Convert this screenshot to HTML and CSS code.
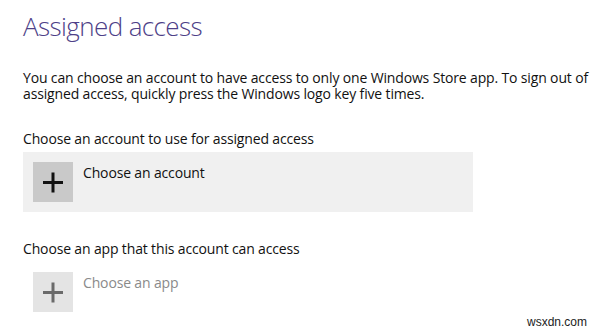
FILE: index.html
```html
<!DOCTYPE html>
<html lang="en">
<head>
<meta charset="utf-8">
<title>Assigned access</title>
<link rel="stylesheet" href="styles.css">
</head>
<body>
<main class="page">
  <h1 class="title">Assigned access</h1>
  <p class="intro">You can choose an account to have access to only one Windows Store app. To sign out of assigned access, quickly press the Windows logo key five times.</p>

  <section class="group">
    <div class="label">Choose an account to use for assigned access</div>
    <div class="picker picker-active">
      <span class="plus plus-dark">
        <svg viewBox="0 0 40 40" width="40" height="40" aria-hidden="true"><path d="M10 20.5H30M20 10.5V30.5" stroke="currentColor" stroke-width="3" fill="none"/></svg>
      </span>
      <span class="picker-text">Choose an account</span>
    </div>
  </section>

  <section class="group">
    <div class="label">Choose an app that this account can access</div>
    <div class="picker picker-disabled">
      <span class="plus plus-light">
        <svg viewBox="0 0 40 40" width="40" height="40" aria-hidden="true"><path d="M10 20.5H30M20 10.5V30.5" stroke="currentColor" stroke-width="3" fill="none"/></svg>
      </span>
      <span class="picker-text picker-text-muted">Choose an app</span>
    </div>
  </section>
</main>
<div class="watermark">wsxdn.com</div>
</body>
</html>
```
FILE: styles.css
```css
html, body {
  margin: 0;
  padding: 0;
  background: #ffffff;
}

body {
  width: 599px;
  height: 333px;
  overflow: hidden;
  position: relative;
  font-family: "Open Sans", "Liberation Sans", sans-serif;
  color: #111111;
}

.page {
  padding: 10px 0 0 23px;
}

.title {
  margin: 0;
  font-size: 26px;
  line-height: 32px;
  font-weight: 300;
  color: #4e3f88;
  letter-spacing: -0.6px;
}

.intro {
  margin: 28px 0 0 0;
  width: 566px;
  font-size: 14px;
  line-height: 16px;
  letter-spacing: -0.15px;
}

.group {
  margin-top: 29px;
}

.label {
  font-size: 14px;
  line-height: 16px;
  letter-spacing: -0.15px;
}

.picker {
  margin-top: 5px;
  width: 450px;
  box-sizing: border-box;
  padding: 10px;
  display: flex;
  gap: 10px;
  align-items: flex-start;
}

.picker-active {
  background: #f0f0f0;
}

.plus {
  width: 40px;
  height: 40px;
  display: block;
  flex: none;
}

.plus svg {
  display: block;
}

.plus-dark {
  background: #c9c9c9;
  color: #111111;
}

.plus-light {
  background: #e4e4e4;
  color: #6a6a6a;
}

.picker-text {
  margin-top: 3px;
  font-size: 14px;
  line-height: 16px;
  letter-spacing: -0.15px;
}

.picker-text-muted {
  color: #8a8a8a;
}

.watermark {
  position: absolute;
  right: 12px;
  bottom: 4px;
  font-family: "Liberation Sans", Arial, sans-serif;
  font-size: 12px;
  line-height: 14px;
  color: #222222;
}
```
